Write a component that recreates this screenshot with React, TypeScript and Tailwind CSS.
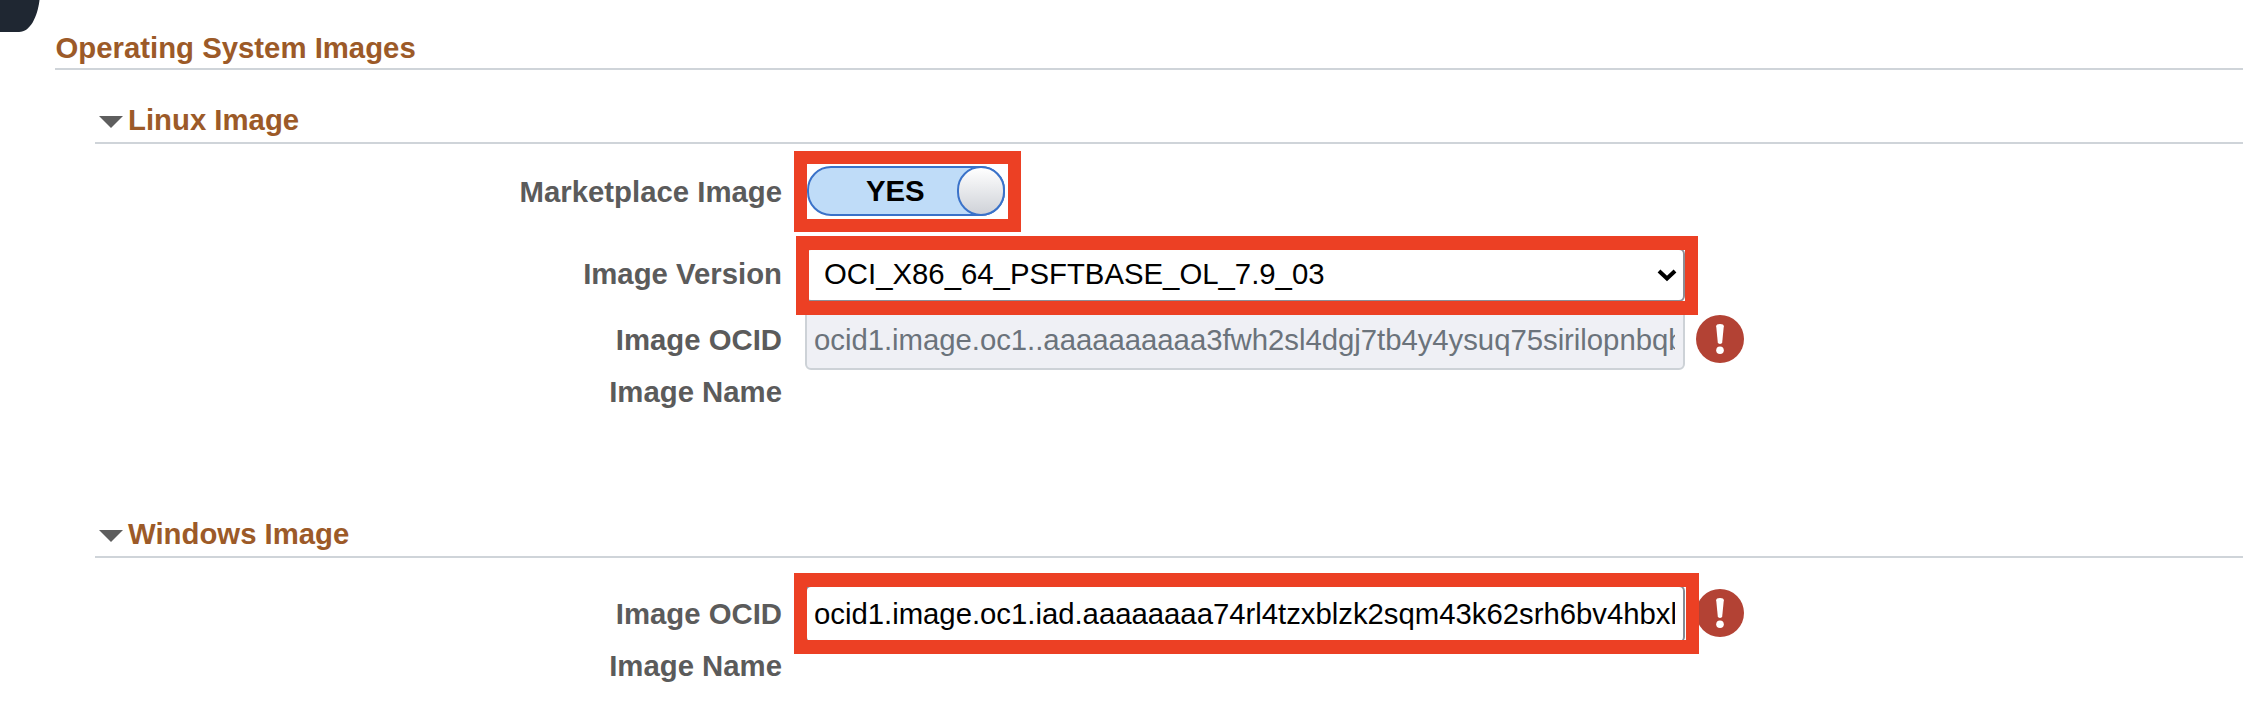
import type { ReactNode } from "react";

function FieldRow({ label, className, labelClassName, children }: { label: string; className: string; labelClassName: string; children?: ReactNode }) {
  return (
    <div className={`flex items-start ${className}`}>
      <div className={`w-[783px] shrink-0 pr-px text-right font-bold text-[#5b5b5b] ${labelClassName}`}>{label}</div>
      {children}
    </div>
  );
}

function SectionHeader({ title, className }: { title: string; className: string }) {
  return (
    <div className={`ml-[95px] flex h-[43px] border-b-2 border-[#cfd4d9] pl-1 ${className}`}>
      <svg className="mt-[15px] h-3 w-6" viewBox="0 0 24 12">
        <path d="M0 0H24L12 12Z" fill="#5e5e5e" />
      </svg>
      <h2 className="ml-[5px] mt-[2px] font-bold text-[#9c5a28]">{title}</h2>
    </div>
  );
}

function ErrorIcon() {
  return (
    <svg className="ml-[11px] mt-[-1px] h-12 w-12 shrink-0" viewBox="0 0 48 48">
      <circle cx="24" cy="24" r="24" fill="#b34234" />
      <path d="M20.2 11.2Q20.2 9 24 9Q27.8 9 27.8 11.2L26.2 27.6Q26 29 24 29Q22 29 21.8 27.6Z" fill="#fff" />
      <circle cx="24" cy="35.2" r="3.8" fill="#fff" />
    </svg>
  );
}

export default function App() {
  return (
    <div className="relative h-[721px] w-[2263px] overflow-hidden bg-white pr-5 font-['Liberation_Sans',Arial,sans-serif] text-[29.33px] leading-[34px]">
      <svg className="absolute left-0 top-0 h-8 w-10" viewBox="0 0 40 32">
        <path d="M0 0H39.5C37.5 17 30 32 19 32H0Z" fill="#1f2732" />
      </svg>
      <h1 className="ml-[55px] h-[70px] border-b-2 border-[#cfd4d9] pl-[0.5px] pt-[31px] font-bold text-[#9c5a28]">Operating System Images</h1>

      <SectionHeader title="Linux Image" className="mt-[31px]" />
      <FieldRow label="Marketplace Image" className="mt-[22px] h-[50px]" labelClassName="pt-[9px]">
        <div className="relative ml-[24px] h-[50px] w-[198px]">
          <div className="flex h-full items-center justify-between rounded-[24px] border-2 border-[#3a72c9] bg-[#bfdcf8]">
            <span className="ml-[57px] font-bold text-black">YES</span>
            <div className="-my-[2px] -mr-[2px] h-[50px] w-[48px] rounded-[24px] border-2 border-[#3a72c9] bg-gradient-to-b from-white to-[#cfd2d8]" />
          </div>
          <div className="absolute -left-[13px] -top-[15px] h-[81px] w-[227px] border-[13px] border-[#ec4024]" />
        </div>
      </FieldRow>
      <FieldRow label="Image Version" className="relative z-10 mt-8 h-[54px]" labelClassName="pt-[9px]">
        <div className="relative ml-[22px] h-[54px] w-[880px]">
          <div className="flex h-full justify-between rounded-[6px] border-2 border-[#8d8d95] bg-white pl-[17px] pr-[6px] pt-[7px] text-black">
            <span>OCI_X86_64_PSFTBASE_OL_7.9_03</span>
            <svg className="mt-3 h-[13px] w-5" viewBox="0 0 20 13">
              <path d="M2 2L10 9.5L18 2" fill="none" stroke="#000" strokeWidth="4" />
            </svg>
          </div>
          <div className="absolute -left-[9px] -top-3 h-[79px] w-[902px] border-x-[13px] border-y-[14px] border-[#ec4024]" />
        </div>
      </FieldRow>
      <FieldRow label="Image OCID" className="mt-[14px] h-[54px]" labelClassName="pt-[7px]">
        <div className="-mt-2 ml-[22px] h-[62px] w-[880px] rounded-[6px] border-2 border-[#cdd2d7] bg-[#eff0f5] pl-[7px] pr-2 pt-[13px] tracking-[-0.03px] text-[#6b737b]">
          <div className="overflow-hidden whitespace-nowrap">ocid1.image.oc1..aaaaaaaaaa3fwh2sl4dgj7tb4y4ysuq75sirilopnbqb</div>
        </div>
        <ErrorIcon />
      </FieldRow>
      <FieldRow label="Image Name" className="mt-[5px] h-[34px]" labelClassName="" />

      <SectionHeader title="Windows Image" className="mt-[106px]" />
      <FieldRow label="Image OCID" className="relative mt-8 h-[54px]" labelClassName="pt-[7px]">
        <div className="relative z-10 ml-[22px] h-[54px] w-[880px]">
          <div className="-mt-[5px] h-[58px] rounded-[6px] border-2 border-[#858b95] bg-white pl-[7px] pr-2 pt-[10px] tracking-[-0.02px] text-black">
            <div className="overflow-hidden whitespace-nowrap">ocid1.image.oc1.iad.aaaaaaaa74rl4tzxblzk2sqm43k62srh6bv4hbxl</div>
          </div>
          <div className="absolute -left-[11px] -top-[17px] h-[81px] w-[905px] border-x-[13px] border-y-[14px] border-[#ec4024]" />
        </div>
        <ErrorIcon />
      </FieldRow>
      <FieldRow label="Image Name" className="mt-[5px] h-[34px]" labelClassName="" />
    </div>
  );
}
